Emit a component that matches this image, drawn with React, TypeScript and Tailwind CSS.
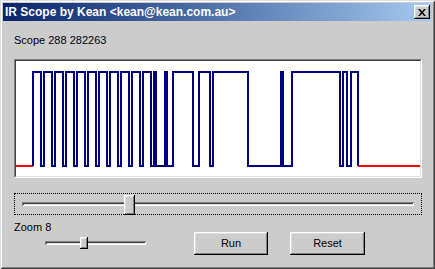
import React from 'react'

// pulse edges, alternating rise / fall, in scope pixels
const edges = [
  17, 26, 28, 37, 39, 48, 50, 59, 61, 70, 72, 81, 83, 92, 94, 103, 105, 114, 116, 125,
  127, 136, 138, 140, 149, 151, 157, 177, 183, 195, 197, 232, 265, 267, 276, 325, 327, 331,
  335, 342,
]

const HI = 11
const LO = 105

function wavePath() {
  let d = `M${edges[0]},${LO}`
  edges.forEach((e, i) => {
    const rise = i % 2 === 0
    // leave a white pixel inside the short low gaps
    const x = !rise && edges[i + 1] !== undefined && edges[i + 1] - e === 2 ? e - 1 : e
    if (i > 0) d += ` H${x}`
    d += ` V${rise ? HI : LO}`
  })
  return d
}

const raised =
  'shadow-[inset_-1px_-1px_#000,inset_1px_1px_#fff,inset_-2px_-2px_#808080,inset_2px_2px_#dfdfdf]'

function Groove({ className }: { className: string }) {
  return (
    <div
      className={`h-[4px] bg-[#cccccc] shadow-[inset_1px_1px_#808080,inset_-1px_-1px_#fff,inset_2px_2px_#404040,inset_-2px_-2px_#dfdfdf] ${className}`}
    />
  )
}

export default function App() {
  const last = edges[edges.length - 1]
  return (
    <div className="w-[435px] h-[269px] bg-[#cccccc] p-[3px] flex flex-col font-['Liberation_Sans',Arial,sans-serif] text-black shadow-[inset_1px_1px_#dfdfdf,inset_-1px_-1px_#404040,inset_2px_2px_#fff,inset_-2px_-2px_#808080]">
      {/* title bar */}
      <div className="h-[18px] flex items-center justify-between pl-[2px] pr-[2px] bg-linear-to-r from-[#0a246a] to-[#a6caf0]">
        <span className="text-white font-bold text-[12px] leading-[18px] whitespace-nowrap">
          IR Scope by Kean &lt;kean@kean.com.au&gt;
        </span>
        <div className={`w-[16px] h-[14px] bg-[#cccccc] flex items-center justify-center ${raised}`}>
          <svg width="8" height="7" viewBox="0 0 8 7">
            <path d="M0,0 L2,0 L4,2.5 L6,0 L8,0 L5,3.5 L8,7 L6,7 L4,4.5 L2,7 L0,7 L3,3.5 Z" fill="#000" />
          </svg>
        </div>
      </div>

      <div className="flex flex-col pl-[11px] pr-[10px]">
        <div className="mt-[12px] h-[14px] leading-[14px] text-[11px]">Scope 288 282263</div>

        {/* scope panel */}
        <div className="mt-[12px] h-[119px] border border-t-[#808080] border-l-[#808080] border-b-white border-r-white">
          <div className="h-full border border-t-[#404040] border-l-[#404040] border-b-[#dfdfdf] border-r-[#dfdfdf] bg-white">
            <svg width="404" height="115" viewBox="0 0 404 115" className="block">
              <path d={`M0,${LO} H${edges[0]}`} stroke="#ff0000" strokeWidth="2" fill="none" />
              <path d={`M${last},${LO} H404`} stroke="#ff0000" strokeWidth="2" fill="none" />
              <path d={wavePath()} stroke="#000080" strokeWidth="2" fill="none" />
            </svg>
          </div>
        </div>

        {/* position slider */}
        <div className="mt-[15px] h-[22px] border border-dotted border-black relative px-[7px] flex items-center">
          <Groove className="w-full" />
          <div className={`absolute left-[109px] top-[1px] w-[11px] h-[20px] bg-[#cccccc] ${raised}`} />
        </div>

        {/* bottom row */}
        <div className="flex mt-[5px]">
          <div className="w-[180px] flex flex-col">
            <div className="h-[14px] leading-[14px] text-[11px]">Zoom 8</div>
            <div className="mt-[3px] h-[12px] relative flex items-center pl-[31px]">
              <Groove className="w-[101px]" />
              <div className={`absolute left-[66px] top-0 w-[8px] h-[12px] bg-[#cccccc] ${raised}`} />
            </div>
          </div>
          <div className="flex gap-[22px] mt-[12px]">
            <button className={`w-[74px] h-[23px] bg-[#cccccc] text-[11px] ${raised}`}>Run</button>
            <button className={`w-[75px] h-[23px] bg-[#cccccc] text-[11px] ${raised}`}>Reset</button>
          </div>
        </div>
      </div>
    </div>
  )
}
